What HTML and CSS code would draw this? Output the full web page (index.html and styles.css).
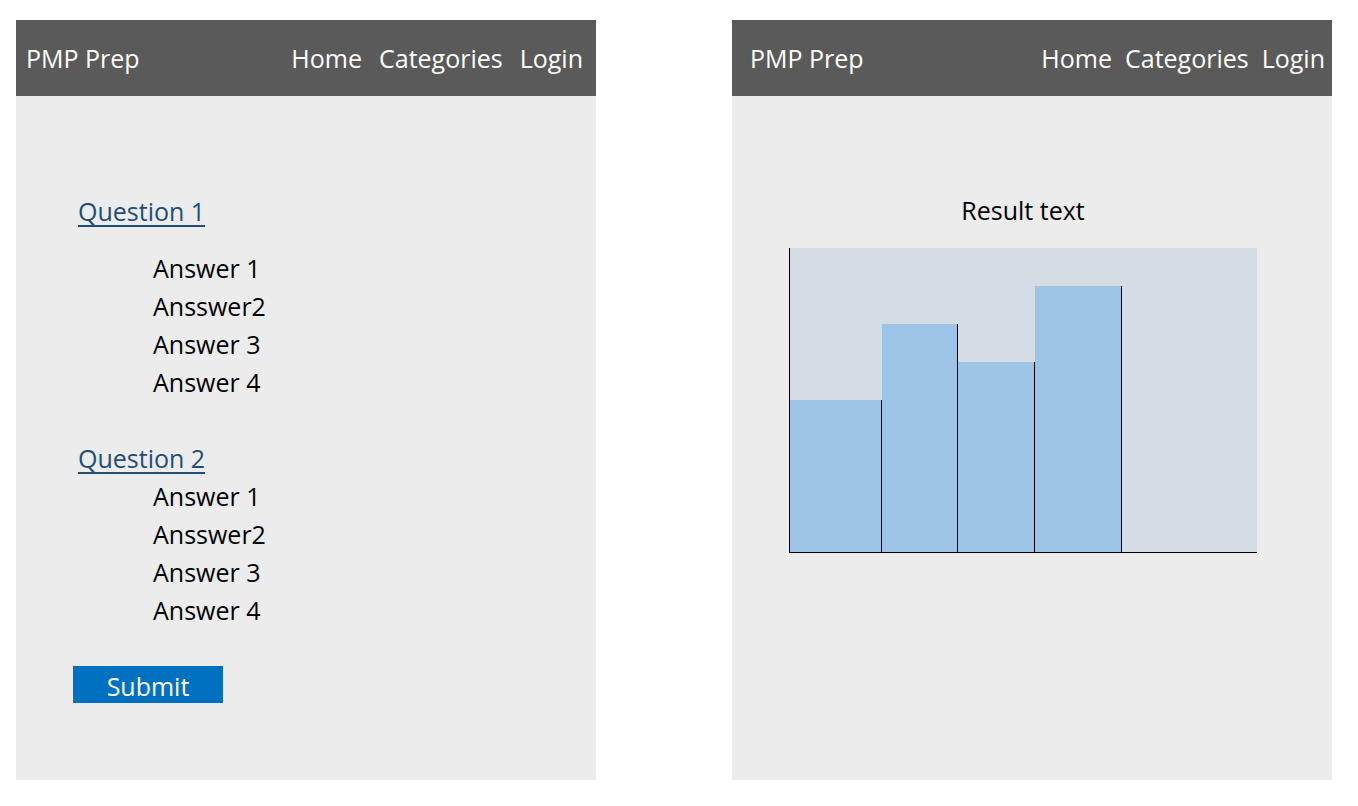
FILE: index.html
```html
<!DOCTYPE html>
<html lang="en">
<head>
<meta charset="utf-8">
<title>PMP Prep</title>
<link rel="stylesheet" href="styles.css">
</head>
<body>
<div class="screens">
  <section class="panel panel-quiz">
    <header class="topbar">
      <span class="brand">PMP Prep</span>
      <nav class="nav">
        <a class="nav-link">Home</a>
        <a class="nav-link">Categories</a>
        <a class="nav-link">Login</a>
      </nav>
    </header>
    <main class="content quiz">
      <div class="question">
        <a class="question-link">Question 1</a>
        <ul class="answers">
          <li>Answer 1</li>
          <li>Ansswer2</li>
          <li>Answer 3</li>
          <li>Answer 4</li>
        </ul>
      </div>
      <div class="question question-2">
        <a class="question-link">Question 2</a>
        <ul class="answers answers-tight">
          <li>Answer 1</li>
          <li>Ansswer2</li>
          <li>Answer 3</li>
          <li>Answer 4</li>
        </ul>
      </div>
      <button class="submit">Submit</button>
    </main>
  </section>
  <section class="panel panel-result">
    <header class="topbar topbar-right">
      <span class="brand">PMP Prep</span>
      <nav class="nav nav-tight">
        <a class="nav-link">Home</a>
        <a class="nav-link">Categories</a>
        <a class="nav-link">Login</a>
      </nav>
    </header>
    <main class="content result">
      <div class="result-block">
        <p class="result-text">Result text</p>
        <div class="chart">
          <div class="bar" style="width:92px;height:152px"></div>
          <div class="bar" style="width:76px;height:228px"></div>
          <div class="bar" style="width:77px;height:190px"></div>
          <div class="bar" style="width:87px;height:266px"></div>
        </div>
      </div>
    </main>
  </section>
</div>
</body>
</html>
```

FILE: styles.css
```css
* { box-sizing: border-box; }
html, body { margin: 0; padding: 0; background: #ffffff; }
body {
  font-family: "Open Sans", "Noto Sans", sans-serif;
  color: #000;
}
.screens {
  display: flex;
  gap: 136px;
  padding: 20px 16px;
}
.panel {
  display: flex;
  flex-direction: column;
  height: 760px;
  background: #ececec;
}
.panel-quiz { width: 580px; }
.panel-result { width: 600px; }

.topbar {
  height: 76px;
  background: #5a5a5a;
  color: #fff;
  display: flex;
  align-items: center;
  justify-content: space-between;
  padding: 0 13px 0 10px;
  font-size: 25px;
}
.topbar-right { padding: 0 7px 0 18px; }
.nav { display: flex; gap: 17px; }
.nav-tight { gap: 13px; }
.nav-link { color: #fff; text-decoration: none; }

.content { flex: 1; }
.quiz { padding: 96px 0 0 62px; }
.question-link {
  display: block;
  font-size: 25px;
  line-height: 38px;
  color: #1f4e79;
  text-decoration: underline;
  text-underline-offset: 4px;
  text-decoration-thickness: 2px;
  margin-bottom: 19px;
}
.question-2 { margin-top: 38px; }
.question-2 .question-link { margin-bottom: 0; }
.answers {
  list-style: none;
  margin: 0;
  padding: 0 0 0 75px;
  font-size: 25px;
  line-height: 38px;
}
.submit {
  display: block;
  margin: 37px 0 0 -5px;
  width: 150px;
  height: 37px;
  border: 0;
  background: #0070c0;
  color: #fff;
  font-family: inherit;
  font-size: 25px;
  line-height: 33px;
  padding: 4px 0 0;
}

.result { padding: 95px 0 0 57px; }
.result-block { width: 468px; }
.result-text {
  margin: 0 0 19px;
  text-align: center;
  font-size: 25px;
  line-height: 38px;
}
.chart {
  height: 305px;
  background: #d6dce4;
  border-left: 1px solid #000;
  border-bottom: 1px solid #000;
  display: flex;
  align-items: flex-end;
}
.bar {
  background: #9dc3e6;
  border-right: 1px solid #000;
  flex: none;
}
```
